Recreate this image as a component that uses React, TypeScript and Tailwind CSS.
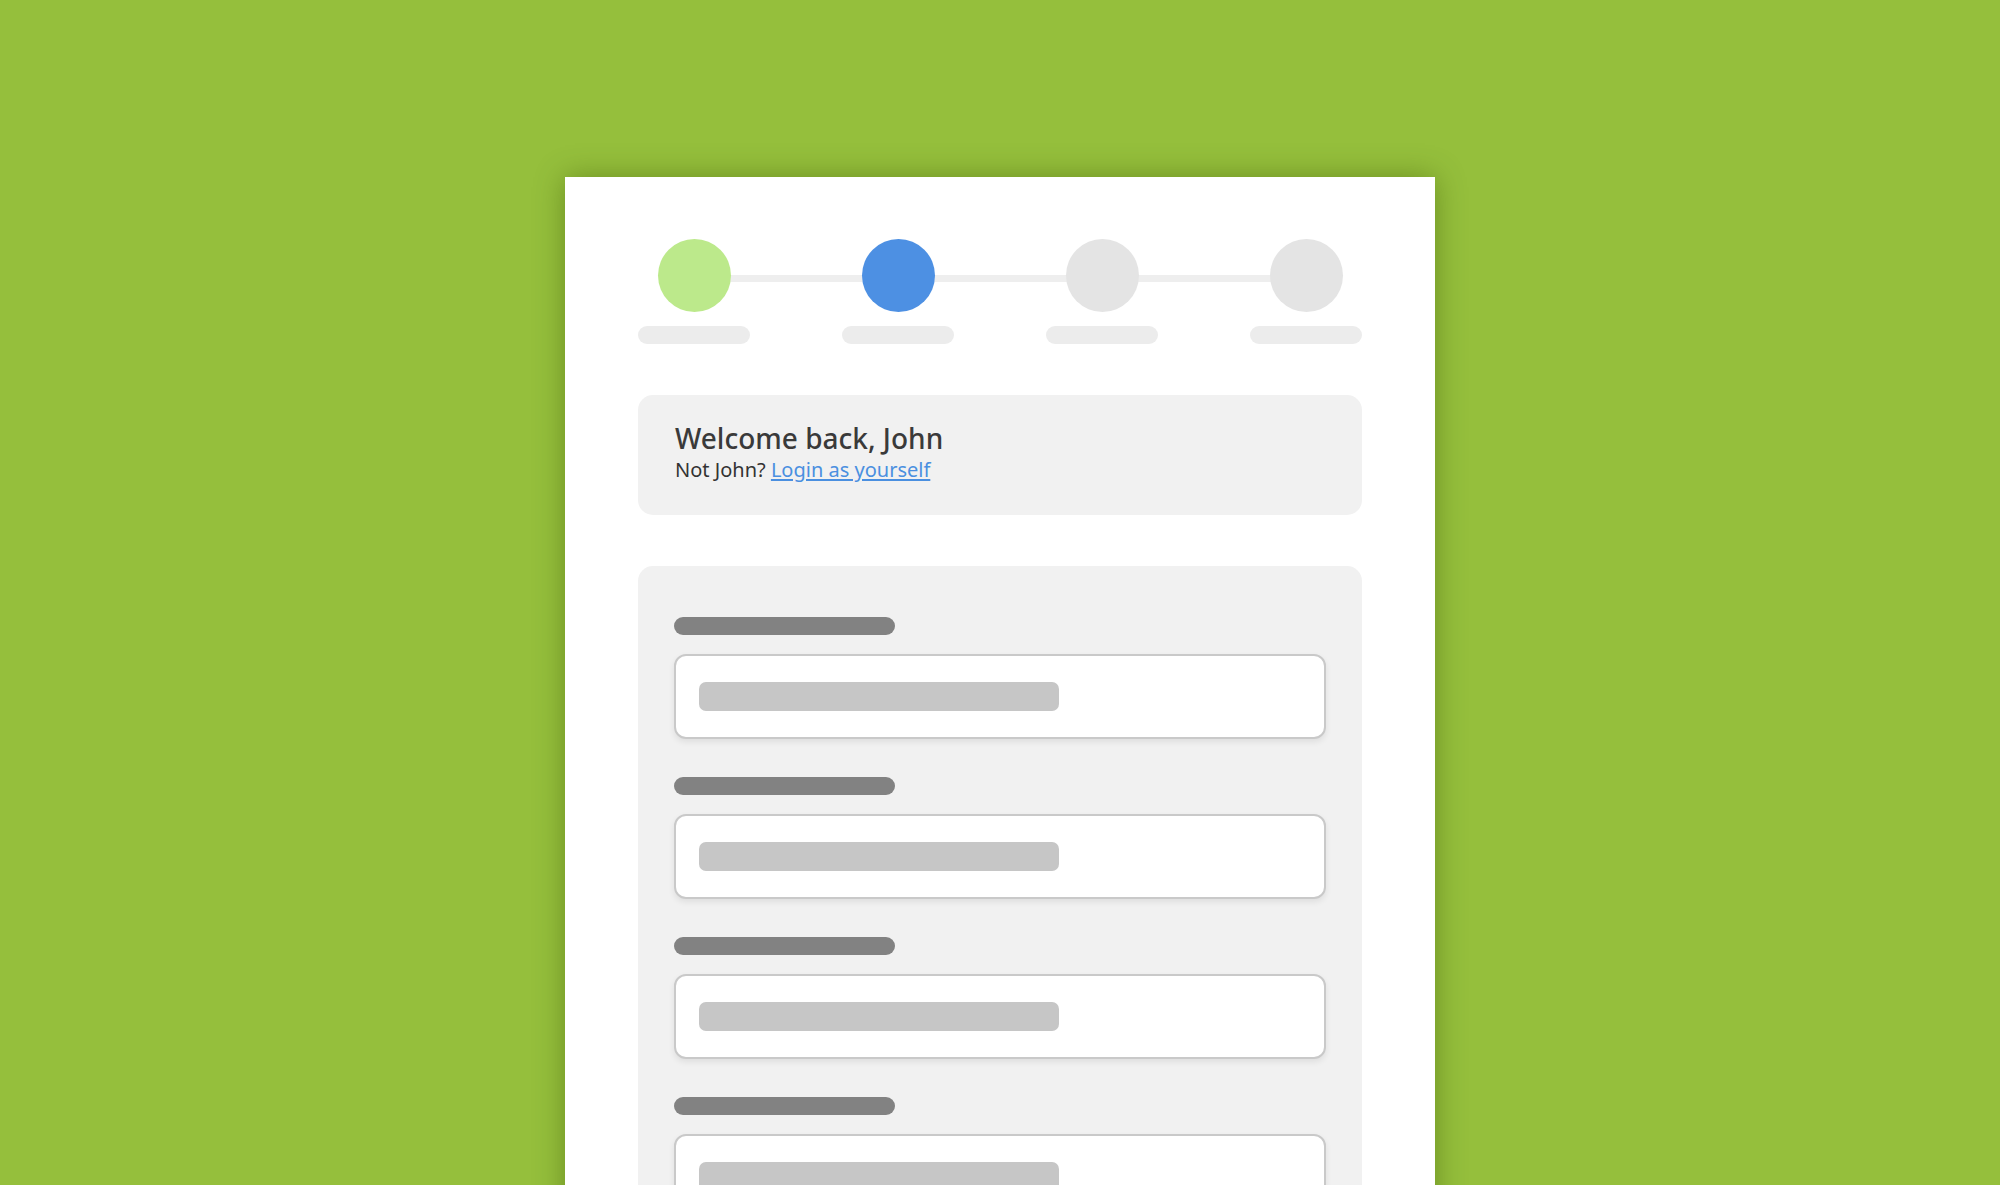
import React from "react";

const steps = [
  { color: "bg-[#bce98b]" },
  { color: "bg-[#4d90e3]" },
  { color: "bg-[#e4e4e4]" },
  { color: "bg-[#e4e4e4]" },
];

function Stepper() {
  return (
    <div className="relative flex justify-between">
      {/* connector running between the first and last dot */}
      <div className="absolute left-[56px] right-[56px] top-[36px] h-[7px] bg-[#eeeeee]" />
      {steps.map((s, i) => (
        <div key={i} className="relative flex w-[112px] flex-col items-center">
          <div className={`h-[73px] w-[73px] rounded-full ${s.color}`} />
          <div className="mt-[14px] h-[18px] w-[112px] rounded-full bg-[#ececec]" />
        </div>
      ))}
    </div>
  );
}

function Field() {
  return (
    <div className="flex flex-col">
      <div className="h-[18px] w-[221px] rounded-full bg-[#828282]" />
      <div className="mt-[19px] flex h-[85px] items-center rounded-[12px] border-2 border-[#c9c9c9] bg-white pl-[23px] shadow-[0_3px_6px_rgba(0,0,0,0.08)]">
        <div className="h-[29px] w-[360px] rounded-[7px] bg-[#c6c6c6]" />
      </div>
    </div>
  );
}

export default function App() {
  return (
    <div
      className="h-[1185px] w-[2000px] overflow-hidden bg-[#95bf3c]"
      style={{ fontFamily: "'Noto Sans', Lato, sans-serif" }}
    >
      <div className="mx-auto mt-[177px] h-[1100px] w-[870px] bg-white px-[73px] pt-[62px] shadow-[0_0_28px_rgba(55,85,0,0.45)]">
        <Stepper />

        <div className="mt-[51px] h-[120px] rounded-[15px] bg-[#f1f1f1] pl-[37px] pt-[24px]">
          <div className="text-[28px] font-medium leading-[38px] text-[#3a3a3a]">
            Welcome back, John
          </div>
          <div className="mt-[0px] text-[20px] leading-[26px] text-[#333333]">
            Not John?{" "}
            <a className="text-[#4a8fe0] underline underline-offset-2" href="#">
              Login as yourself
            </a>
          </div>
        </div>

        <div className="mt-[51px] flex flex-col gap-[38px] rounded-[15px] bg-[#f1f1f1] px-[36px] pb-[60px] pt-[51px]">
          <Field />
          <Field />
          <Field />
          <Field />
        </div>
      </div>
    </div>
  );
}
